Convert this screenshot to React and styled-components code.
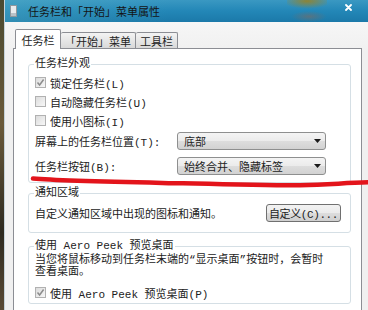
import React from "react";
import styled, { createGlobalStyle } from "styled-components";

const FONT = `"Liberation Mono", "Noto Sans CJK SC", monospace`;

const GlobalStyle = createGlobalStyle`
  html, body {
    margin: 0;
    padding: 0;
  }
  body {
    width: 368px;
    height: 310px;
    overflow: hidden;
    font-family: ${FONT};
    font-size: 11px;
    color: #222;
  }
`;

const Desktop = styled.div`
  position: relative;
  display: flex;
  width: 368px;
  height: 310px;
  background: linear-gradient(to bottom, #4a4a30, #6b5a3a 40%, #2e2a20 75%, #5a4a35);
`;

const Window = styled.div`
  flex: 1;
  min-width: 0;
  margin-left: 4px;
  display: flex;
  flex-direction: column;
  border-left: 1px solid #c4d2da;
`;

const TitleBar = styled.div`
  flex: none;
  height: 22px;
  display: flex;
  align-items: center;
  padding-left: 5px;
  background: linear-gradient(to right, rgba(90, 180, 200, 0.35), rgba(0, 0, 0, 0) 45%),
    linear-gradient(to bottom, #3a98c2 0%, #2387b7 50%, #1b79a9 100%);
`;

const Title = styled.span`
  margin-left: 11px;
  font-family: "Noto Sans CJK SC", sans-serif;
  font-size: 11px;
  color: #141414;
  white-space: nowrap;
`;

const TitleGlow = styled.span`
  margin-left: auto;
  width: 40px;
  height: 22px;
  background: radial-gradient(ellipse 60% 35% at 50% 5%, rgba(150, 130, 40, 0.9), rgba(150, 130, 40, 0) 100%),
    radial-gradient(ellipse 45% 25% at 55% 75%, rgba(110, 110, 110, 0.7), rgba(110, 110, 110, 0) 100%);
`;

const CloseBtn = styled.span`
  display: flex;
  margin: 0 16px 7px 18px;
`;

const Body = styled.div`
  flex: 1;
  min-height: 0;
  display: flex;
  flex-direction: column;
  padding: 7px 6px 0 8px;
  background: linear-gradient(to bottom, #f6f6f6, #f0f0f0 30px);
`;

const Tabs = styled.div`
  position: relative;
  z-index: 1;
  display: flex;
  align-items: flex-end;
  height: 19px;
  padding-left: 2px;
`;

const Tab = styled.div`
  box-sizing: border-box;
  width: ${(p) => p.$w}px;
  height: ${(p) => (p.$active ? 20 : 16)}px;
  margin-bottom: ${(p) => (p.$active ? -1 : 0)}px;
  display: flex;
  align-items: center;
  justify-content: center;
  border: 1px solid #8c8e94;
  border-bottom: none;
  border-left: ${(p) => (p.$active ? "1px solid #8c8e94" : "none")};
  border-radius: 2px 2px 0 0;
  background: ${(p) =>
    p.$active ? "#fff" : "linear-gradient(to bottom, #f3f3f3, #e6e6e6 50%, #d9d9d9)"};
  font-family: "Noto Sans CJK SC", sans-serif;
  font-size: 11px;
  white-space: nowrap;
`;

const Panel = styled.div`
  flex: 1;
  display: flex;
  flex-direction: column;
  background: #fff;
  border: 1px solid #8c8e94;
  border-bottom: none;
  padding: 8px 10px 0 14px;
`;

const Group = styled.fieldset`
  margin: ${(p) => p.$top || 0}px 0 0;
  padding: ${(p) => p.$pt}px 6px ${(p) => p.$pb}px;
  border: 1px solid #d5dfe5;
  border-radius: 3px;
  min-width: 0;
`;

const Legend = styled.legend`
  padding: 0 1px;
  margin-left: -1px;
  height: 14px;
  line-height: 14px;
  white-space: nowrap;
`;

const CheckRow = styled.div`
  display: flex;
  align-items: center;
  gap: 4px;
  height: 19px;
  margin-top: ${(p) => p.$top || 0}px;
  white-space: nowrap;
`;

const Box = styled.span`
  box-sizing: border-box;
  width: 11px;
  height: 11px;
  display: flex;
  align-items: center;
  justify-content: center;
  border: 1px solid #b1b1b1;
  background: linear-gradient(to bottom right, #dcdcdc, #f7f7f7);
`;

const SelectRow = styled.div`
  display: grid;
  grid-template-columns: 142px 149px;
  align-items: center;
  height: 20px;
  margin-top: ${(p) => p.$top || 0}px;
  white-space: nowrap;
`;

const Select = styled.div`
  box-sizing: border-box;
  height: 18px;
  display: flex;
  align-items: center;
  justify-content: space-between;
  padding: 0 4px 0 6px;
  border: 1px solid #8e8f8f;
  border-radius: 3px;
  background: linear-gradient(to bottom, #f4f4f4, #ebebeb 50%, #dddddd 51%, #d2d2d2);
`;

const NotifyRow = styled.div`
  display: flex;
  align-items: center;
  height: 20px;
  white-space: nowrap;
`;

const Button = styled.div`
  box-sizing: border-box;
  width: 75px;
  height: 18px;
  margin: 0 3px 0 auto;
  display: flex;
  align-items: center;
  justify-content: center;
  border: 1px solid #707070;
  border-radius: 3px;
  background: linear-gradient(to bottom, #f2f2f2, #ebebeb 50%, #dddddd 51%, #cfcfcf);
  letter-spacing: -0.4px;
`;

const Para = styled.div`
  line-height: 12px;
  white-space: nowrap;
`;

const Annotation = styled.svg`
  position: absolute;
  left: 0;
  top: 0;
  pointer-events: none;
`;

const WindowIcon = () => (
  <svg width="7" height="12" viewBox="0 0 7 12">
    <rect x="0.5" y="0.5" width="6" height="11" fill="#e9ecee" stroke="#8f989e" />
    <rect x="1" y="8" width="5" height="3" fill="#b9c2c8" />
  </svg>
);

const CloseIcon = () => (
  <svg width="7" height="7" viewBox="0 0 7 7">
    <path d="M1 1 L6 6 M6 1 L1 6" stroke="#fff" strokeWidth="1.8" strokeLinecap="round" />
  </svg>
);

const Check = () => (
  <svg width="9" height="9" viewBox="0 0 9 9">
    <path d="M1.5 4.5 L3.6 7 L7.6 1.5" fill="none" stroke="#8c8c8c" strokeWidth="1.5" />
  </svg>
);

const Arrow = () => (
  <svg width="7" height="4" viewBox="0 0 7 4">
    <path d="M0 0 H7 L3.5 4 Z" fill="#1a1a1a" />
  </svg>
);

const CheckItem = ({ checked, top, children }) => (
  <CheckRow $top={top}>
    <Box>{checked && <Check />}</Box>
    <span>{children}</span>
  </CheckRow>
);

const Dropdown = ({ label, value, top }) => (
  <SelectRow $top={top}>
    <span>{label}</span>
    <Select>
      <span>{value}</span>
      <Arrow />
    </Select>
  </SelectRow>
);

export default function App() {
  return (
    <>
      <GlobalStyle />
      <Desktop>
        <Window>
          <TitleBar>
            <WindowIcon />
            <Title>任务栏和「开始」菜单属性</Title>
            <TitleGlow />
            <CloseBtn>
              <CloseIcon />
            </CloseBtn>
          </TitleBar>
          <Body>
            <Tabs>
              <Tab $active $w={46}>任务栏</Tab>
              <Tab $w={75}>「开始」菜单</Tab>
              <Tab $w={42}>工具栏</Tab>
            </Tabs>
            <Panel>
              <Group $pt={2} $pb={6}>
                <Legend>任务栏外观</Legend>
                <CheckItem checked>锁定任务栏(L)</CheckItem>
                <CheckItem>自动隐藏任务栏(U)</CheckItem>
                <CheckItem>使用小图标(I)</CheckItem>
                <Dropdown top={1} label="屏幕上的任务栏位置(T):" value="底部" />
                <Dropdown top={5} label="任务栏按钮(B):" value="始终合并、隐藏标签" />
              </Group>
              <Group $top={3} $pt={3} $pb={9}>
                <Legend>通知区域</Legend>
                <NotifyRow>
                  <span>自定义通知区域中出现的图标和通知。</span>
                  <Button>自定义(C)...</Button>
                </NotifyRow>
              </Group>
              <Group $top={6} $pt={1} $pb={1}>
                <Legend>使用 Aero Peek 预览桌面</Legend>
                <Para>
                  当您将鼠标移动到任务栏末端的“显示桌面”按钮时，会暂时
                  <br />
                  查看桌面。
                </Para>
                <CheckItem checked top={5}>使用 Aero Peek 预览桌面(P)</CheckItem>
              </Group>
            </Panel>
          </Body>
        </Window>
        <Annotation width="368" height="310" viewBox="0 0 368 310">
          <path
            d="M33 178.5 C 60 181, 110 181.8, 183 183.3 S 270 185.8, 300 185.2 S 345 182.8, 370 182.3"
            fill="none"
            stroke="#e3141b"
            strokeWidth="4.5"
            strokeLinecap="round"
          />
        </Annotation>
      </Desktop>
    </>
  );
}
